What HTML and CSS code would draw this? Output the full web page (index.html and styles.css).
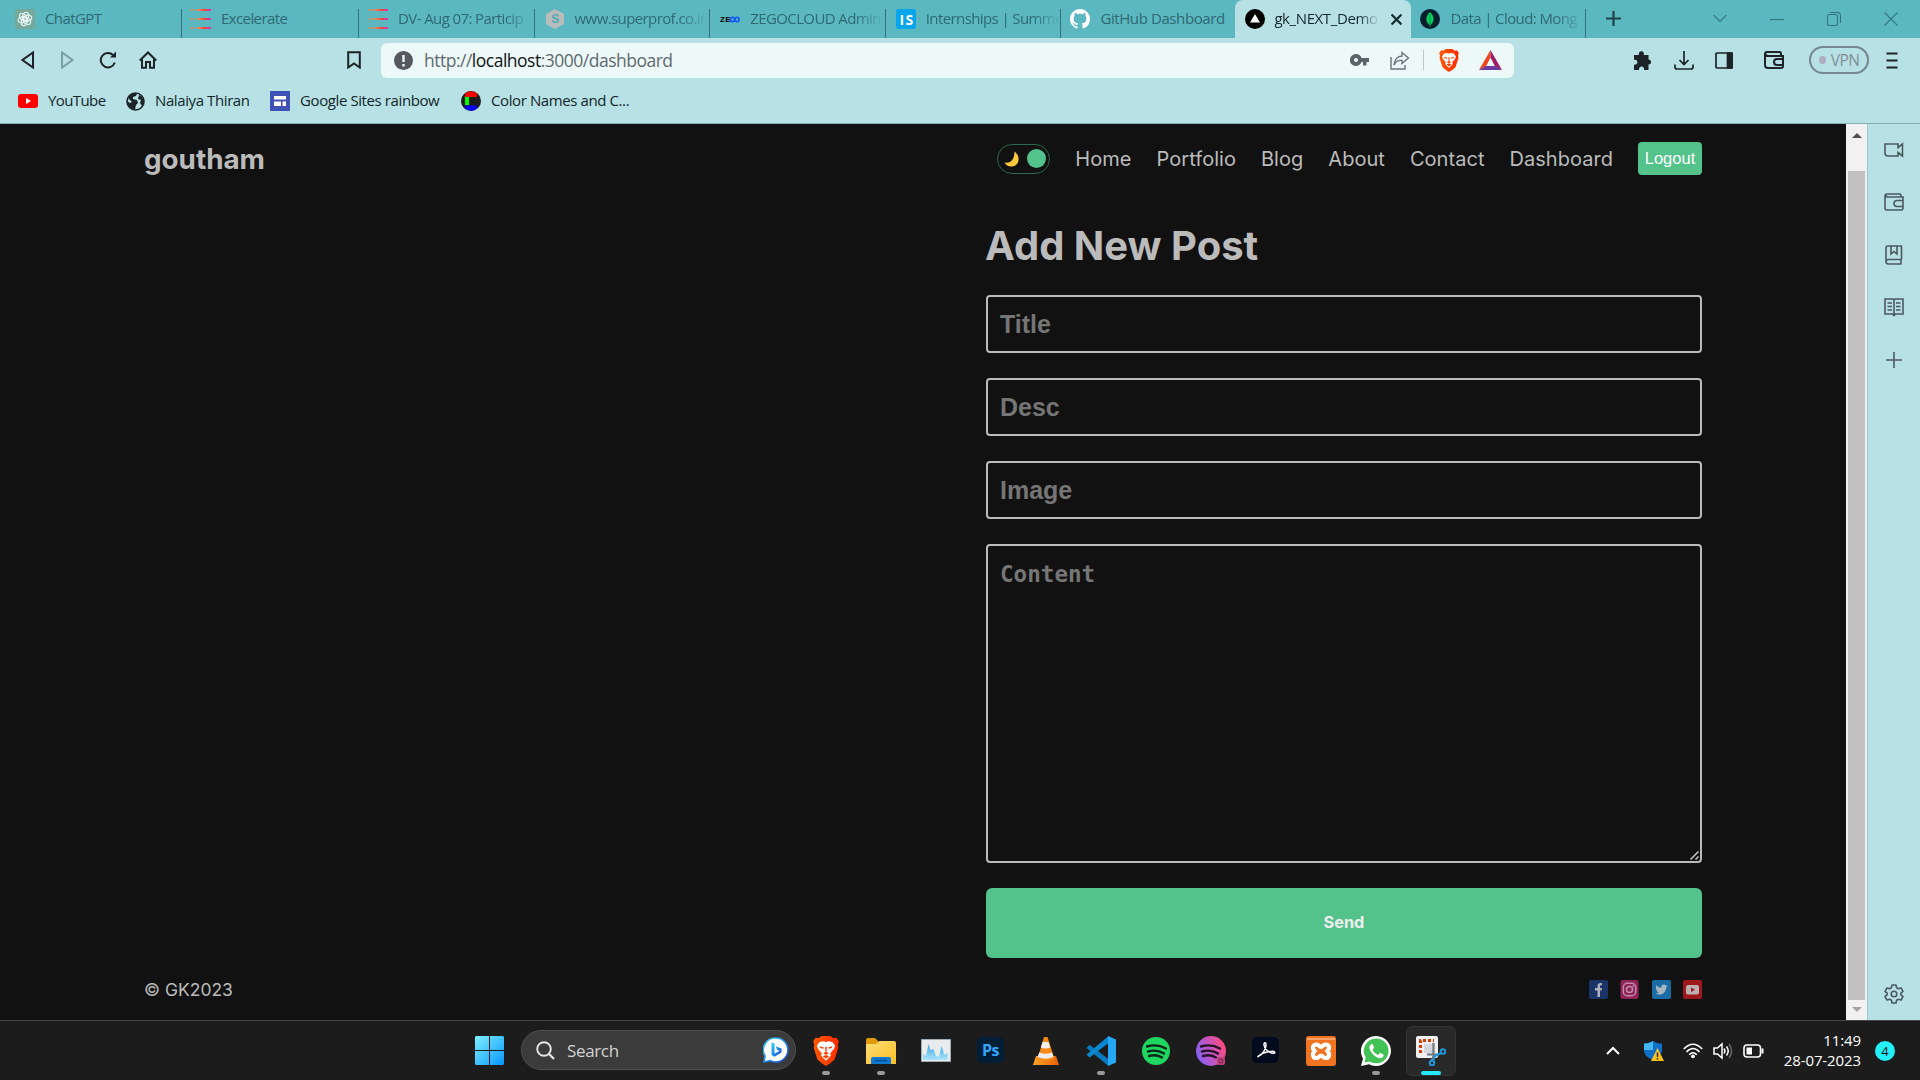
FILE: index.html
```html
<!DOCTYPE html>
<html lang="en">
<head>
<meta charset="utf-8">
<title>gk_NEXT_Demo</title>
<link rel="stylesheet" href="styles.css">
</head>
<body>
<svg class="defs" width="0" height="0" aria-hidden="true">
  <defs>
    <linearGradient id="warm" x1="0" x2="1" y1="0" y2="0"><stop offset="0" stop-color="#f98a4a"/><stop offset=".5" stop-color="#f0463f"/><stop offset="1" stop-color="#e22bb5"/></linearGradient>
    <linearGradient id="win" x1="0" x2="1" y1="0" y2="1"><stop offset="0" stop-color="#7df0fd"/><stop offset="1" stop-color="#0795fb"/></linearGradient>
    <linearGradient id="folder" x1="0" x2="1" y1="0" y2="1"><stop offset="0" stop-color="#ffdf77"/><stop offset="1" stop-color="#fdbd25"/></linearGradient>
    <linearGradient id="brave" x1="0" x2="1" y1="0" y2="0"><stop offset="0" stop-color="#ff5a00"/><stop offset="1" stop-color="#ff2a00"/></linearGradient>
    <linearGradient id="chart" x1="0" x2="0" y1="0" y2="1"><stop offset="0" stop-color="#3aa4e0"/><stop offset="1" stop-color="#a8e4fb"/></linearGradient>
    <linearGradient id="spot" x1="0" x2="1" y1=".7" y2=".3"><stop offset="0" stop-color="#8060f5"/><stop offset=".5" stop-color="#c455c0"/><stop offset="1" stop-color="#ff4a78"/></linearGradient>
    <linearGradient id="bing" x1="0" x2="1" y1="0" y2="1"><stop offset="0" stop-color="#2fd3f5"/><stop offset="1" stop-color="#1447d8"/></linearGradient>
    <linearGradient id="cone" x1="0" x2="1" y1="0" y2="0"><stop offset="0" stop-color="#ffa227"/><stop offset="1" stop-color="#e8600a"/></linearGradient>
    <symbol id="rows" viewBox="0 0 20 20"><g fill="#f08a4a"><path d="M0 0h1v2H0zM2 0h1v2H2zM4.500 0H6v2H4.500zM0 9h1v2H0zM2 9h1v2H2zM4.500 9H6v2H4.500zM0 18h1v2H0zM2 18h1v2H2zM4.500 18H6v2H4.500z"/></g><path d="M7 0h13v2H7zM7 9h13v2H7zM7 18h13v2H7z" fill="url(#warm)"/></symbol>
    <symbol id="lion" viewBox="0 0 24 28"><path d="M5 2 8 0h8l3 2 2.500-.5L24 5l-1 3 .5 3-3.500 11-4 3.500L12 28l-4-2.500L4 22 .5 11 1 8 0 5l2.500-3.500z" fill="url(#brave)"/><path d="M12 5.500 9.500 5 6 5.500 3.500 9l1 3 3.500 4-.5 2.500L12 23l4.500-4.500L16 16l3.500-4 1-3L18 5.500 14.500 5z" fill="#fff"/><path d="m6 9.500 4 1.300-.5 1-3-.6zM18 9.500l-4 1.300.5 1 3-.6zM11.200 10h1.600l-.2 5 2 1.200-2.600 1.600L9.400 16.200l2-1.200zM9 19l3-1.200 3 1.200-3 2.300z" fill="#ff4208"/></symbol>
  </defs>
</svg>

<header class="chrome">
  <div class="tabs">
    <div class="tab first"><svg class="fav" viewBox="0 0 20 20"><rect width="20" height="20" rx="2" fill="#75a99c"/><g fill="none" stroke="#eaf6f3" stroke-width="1.200"><ellipse cx="10" cy="7.300" rx="3" ry="4.200" transform="rotate(15 10 10)"/><ellipse cx="10" cy="7.300" rx="3" ry="4.200" transform="rotate(75 10 10)"/><ellipse cx="10" cy="7.300" rx="3" ry="4.200" transform="rotate(135 10 10)"/><ellipse cx="10" cy="7.300" rx="3" ry="4.200" transform="rotate(195 10 10)"/><ellipse cx="10" cy="7.300" rx="3" ry="4.200" transform="rotate(255 10 10)"/><ellipse cx="10" cy="7.300" rx="3" ry="4.200" transform="rotate(315 10 10)"/></g></svg><span>ChatGPT</span></div>
    <div class="tab wide"><svg class="fav"><use href="#rows"/></svg><span>Excelerate</span></div>
    <div class="tab fade near"><svg class="fav"><use href="#rows"/></svg><span>DV- Aug 07: Particip</span></div>
    <div class="tab fade"><svg class="fav" viewBox="0 0 20 20"><path d="M10 0l9 5v10l-9 5-9-5V5z" fill="#b9bcbb"/><text x="10" y="14" class="glyph teal" text-anchor="middle">S</text></svg><span>www.superprof.co.in</span></div>
    <div class="tab fade"><svg class="fav" viewBox="0 0 20 20"><text x="0" y="13" class="zego" textLength="10">ZE</text><g fill="none" stroke="#1558f0" stroke-width="1.700"><circle cx="12.500" cy="10.500" r="2.100"/><circle cx="17" cy="10.500" r="2.100"/></g></svg><span>ZEGOCLOUD Admin</span></div>
    <div class="tab fade"><svg class="fav" viewBox="0 0 20 20"><rect width="20" height="20" rx="2.500" fill="#06a5ec"/><text x="10" y="15.500" class="is" text-anchor="middle" textLength="13">IS</text></svg><span>Internships | Summe</span></div>
    <div class="tab last-before"><svg class="fav" viewBox="0 0 16 16"><path fill="#fff" d="M8 0C3.580 0 0 3.580 0 8c0 3.540 2.290 6.530 5.470 7.590.4.070.55-.17.55-.38 0-.19-.01-.82-.01-1.490-2.010.37-2.530-.49-2.690-.94-.09-.23-.48-.94-.82-1.130-.28-.15-.68-.52-.01-.53.63-.01 1.080.58 1.230.82.72 1.210 1.870.87 2.330.66.07-.52.28-.87.51-1.070-1.780-.2-3.640-.89-3.640-3.950 0-.87.31-1.590.82-2.150-.08-.2-.36-1.020.08-2.120 0 0 .67-.21 2.200.82.64-.18 1.320-.27 2-.27s1.360.09 2 .27c1.530-1.040 2.200-.82 2.200-.82.44 1.100.16 1.920.08 2.120.51.56.82 1.270.82 2.150 0 3.070-1.870 3.750-3.650 3.950.29.25.54.73.54 1.480 0 1.070-.01 1.930-.01 2.200 0 .21.15.46.55.38A8.010 8.010 0 0 0 16 8c0-4.420-3.580-8-8-8z"/></svg><span>GitHub Dashboard</span></div>
    <div class="tab active"><svg class="fav" viewBox="0 0 20 20"><circle cx="10" cy="10" r="10"/><path d="M10 5l5 8.500H5z" fill="#fff"/></svg><span>gk_NEXT_Demo</span><svg class="close" viewBox="0 0 10 10"><path d="M.5.500l9 9M9.500.500l-9 9" stroke="#15292e" stroke-width="2"/></svg></div>
    <div class="tab fade end"><svg class="fav" viewBox="0 0 20 20"><circle cx="10" cy="10" r="10" fill="#001e2b"/><path d="M10 3c5 5 4.500 10 0 13.500C5.500 13 5 8 10 3z" fill="#00d563"/><path d="M10 5v13" stroke="#00853f" stroke-width="1"/></svg><span>Data | Cloud: Mong</span></div>
    <svg class="plus" viewBox="0 0 15 15"><path d="M7.500 0v15M0 7.500h15" stroke="#1d444b" stroke-width="2.200"/></svg>
    <div class="winctl">
      <svg width="14" height="9" viewBox="0 0 14 9"><path d="M.5.800 7 7.500 13.500.800"/></svg>
      <svg width="14" height="14" viewBox="0 0 14 14"><path d="M0 7.500h14"/></svg>
      <svg width="14" height="14" viewBox="0 0 14 14"><rect x=".5" y="2.500" width="10" height="11" rx="2"/><path d="M3 .5h7.500a3 3 0 0 1 3 3V11"/></svg>
      <svg width="14" height="14" viewBox="0 0 14 14"><path d="M.5.500l13 13M13.500.500l-13 13"/></svg>
    </div>
  </div>

  <div class="toolbar">
    <div class="navbtns">
      <svg width="14" height="18" viewBox="0 0 14 18"><path d="M12 1.500v15L1.500 9z"/></svg>
      <svg class="dim" width="14" height="18" viewBox="0 0 14 18"><path d="M2 1.500v15L12.500 9z"/></svg>
      <svg width="18" height="18" viewBox="0 0 18 18"><path d="M15.800 11.500A7.200 7.200 0 1 1 14 4"/><path d="M11 6.500h6V.5z" fill="#1d2326" stroke="none"/></svg>
      <svg class="home" width="18" height="18" viewBox="0 0 18 18"><path d="M.8 9.500 9 1.500l8.200 8M3 8v8.800h4V11h4v5.800h4V8"/></svg>
    </div>
    <svg class="bm" width="14" height="18" viewBox="0 0 14 18"><path d="M1.200 1.200h11.600v15.300L7 12.500l-5.800 4z"/></svg>
    <div class="url">
      <svg width="19" height="19" viewBox="0 0 19 19"><circle cx="9.500" cy="9.500" r="9.500" fill="#55595f"/><path d="M9.500 4v7M9.500 13v2.500" stroke="#edf8f9" stroke-width="2.400"/></svg>
      <span class="addr">http://<b>localhost</b>:3000/dashboard</span>
      <svg class="key" width="19" height="12" viewBox="0 0 19 12"><path d="M6 0a6 6 0 1 0 5.500 8H13v3.500h3.500V8H19V4h-7.500A6 6 0 0 0 6 0zm0 4a2 2 0 1 1 0 4 2 2 0 0 1 0-4z" fill="#5d6467" fill-rule="evenodd"/></svg>
      <svg class="share" width="20" height="19" viewBox="0 0 20 19"><path class="ln" d="M1 6v12h14v-4M12 1.500l6.500 5.500-6.500 5.500V9.500C8 9 5.500 11 4 14c.3-5 3.500-9 8-9z"/></svg>
      <i class="vline"></i>
      <svg class="shield" width="20" height="23"><use href="#lion"/></svg>
      <svg class="bat" width="23" height="20" viewBox="0 0 23 20"><path d="M11.500 0 0 20l7-3.500 4.500-9z" fill="#f0471f"/><path d="M11.500 0 23 20l-7-3.500-4.500-9z" fill="#9c1f63"/><path d="M0 20h23l-7-4H7z" fill="#6a3a9c"/></svg>
    </div>
    <div class="exts">
      <svg width="18" height="19" viewBox="0 0 18 19"><path d="M0 4h5a2.600 2.600 0 1 1 4.700 0H14.500v4.500a2.500 2.500 0 1 1 0 5V19H10a2.600 2.600 0 1 0-4.900 0H0v-5.500a2.500 2.500 0 1 0 0-4.700z" fill="#1d2326" stroke="none"/></svg>
      <svg class="thin" width="20" height="19" viewBox="0 0 20 19"><path d="M10 0v13M5.500 9l4.500 4.500L14.500 9M1 13.500V16a2 2 0 0 0 2 2h14a2 2 0 0 0 2-2v-2.500"/></svg>
      <svg class="thin" width="18" height="17" viewBox="0 0 18 17"><rect x="1" y="1" width="16" height="15" rx="1"/><path d="M12.500 1H17v15h-4.500z" fill="#1d2326"/></svg>
      <svg class="wal" width="20" height="18" viewBox="0 0 20 18"><path d="M17 5V2.500A1.500 1.500 0 0 0 15.500 1H3a2 2 0 0 0-2 2v11a3 3 0 0 0 3 3h13a2 2 0 0 0 2-2V5H4A3 3 0 0 1 1.500 3M19 8h-6a3 3 0 0 0 0 6h6"/></svg>
      <span class="vpn"><i></i>VPN</span>
      <svg class="burger" width="12" height="17" viewBox="0 0 12 17"><path d="M.5 1.500h11M.5 8.500h11M.5 15.500h11"/></svg>
    </div>
  </div>

  <div class="bookmarks">
    <a><svg width="20" height="20" viewBox="0 0 20 20"><rect y="3" width="20" height="14" rx="3" fill="red"/><path d="M8 7l5 3-5 3z" fill="#fff"/></svg><span>YouTube</span></a>
    <a class="b2"><svg width="19" height="19" viewBox="0 0 19 19"><circle cx="9.500" cy="9.500" r="8.500" fill="#b7e1e4" stroke="#1d2326" stroke-width="1.600"/><path d="M3 4c2-2.500 5-3 8-2.500L10 4 7 5v2l4 1 1 3-2 2-1 4.500C4 17 1 13 1 9l3 2 2-1-3-3zM13 3l3 2 2 5-2 4-2-3 1-3-3-1z" fill="#1d2326"/></svg><span>Nalaiya Thiran</span></a>
    <a class="b3"><svg width="20" height="20" viewBox="0 0 20 20"><path fill="#4051b5" d="M0 0h20v20H0z"/><path d="M4 5h12v3.500H4zM4 10.500h7V15H4zM12.500 10.500H16V15h-3.500z" fill="#fff"/></svg><span>Google Sites rainbow</span></a>
    <a class="b4"><svg width="20" height="20" viewBox="0 0 20 20"><circle cx="10" cy="10" r="10" fill="#1c1c1c"/><path d="M4 2.500Q10-2 16 2.500V6H4z" fill="red"/><path d="M4 6h4v8H4z" fill="#0f0"/><path d="M4 14.500h12v3Q10 22 4 17.500z" fill="#00f"/></svg><span>Color Names and C...</span></a>
  </div>
</header>

<div class="middle">
  <main class="page">
    <nav class="site-nav">
      <a class="logo">goutham</a>
      <div class="links">
        <div class="toggle"><svg width="16" height="16" viewBox="0 0 16 16"><path d="M10.500.5C16.500 5 15.500 13 10 15c-4 1.500-7.500 0-9.500-3.500 6 1.500 10-3 10-11z" fill="#ffc83d"/></svg><i></i></div>
        <a>Home</a><a>Portfolio</a><a>Blog</a><a>About</a><a>Contact</a><a>Dashboard</a>
        <button class="logout">Logout</button>
      </div>
    </nav>
    <form class="post">
      <h1>Add New Post</h1>
      <input placeholder="Title"><input placeholder="Desc"><input placeholder="Image">
      <div class="area">
        <textarea placeholder="Content"></textarea>
        <svg class="grip" width="9" height="9" viewBox="0 0 9 9"><path d="M.5 8.500l8-8M5.500 8.500l3-3" stroke="#c8c8c8" stroke-width="1.500"/></svg>
      </div>
      <button type="button" class="send">Send</button>
    </form>
    <footer class="foot">
      <span>© GK2023</span>
      <div class="social">
        <svg viewBox="0 0 19 19"><rect width="19" height="19" rx="2" fill="#1b3467"/><path d="M8.500 17V10.500H6V8h2.500V6c0-2 1.200-3 3-3H13v2.300h-1c-.8 0-1 .4-1 1.200V8h2l-.4 2.500H11V17z" fill="#aeb2bb"/></svg>
        <svg viewBox="0 0 19 19"><rect x=".5" width="18" height="19" rx="2" fill="#8f2257"/><g fill="none" stroke="#c08aa6" stroke-width="1.500"><rect x="3.300" y="3.300" width="12.400" height="12.400" rx="4"/><circle cx="9.500" cy="9.500" r="3"/></g><circle cx="13.200" cy="5.900" r=".9" fill="#c08aa6"/></svg>
        <svg viewBox="0 0 19 19"><rect width="19" height="19" rx="2" fill="#1b6ba5"/><path d="M15.500 6l-1.400 1.400c0 4-3 7.100-6.800 7.100-1.500 0-2.700-.4-3.800-1 1.300.1 2.400-.2 3.400-1-1.100-.1-1.900-.8-2.200-1.700h1c-1.200-.4-1.900-1.300-1.900-2.500l1 .3C3.800 7.700 3.500 6.400 4.100 5.200 5.500 6.700 7.300 7.600 9.300 7.700c-.5-2.600 2.300-4.200 4.200-2.500l1.600-.5-.9 1.300z" fill="#a9b8c2"/></svg>
        <svg viewBox="0 0 19 19"><rect width="19" height="19" rx="2" fill="#9c181c"/><rect x="3" y="5" width="13" height="9.500" rx="2" fill="#bdb0b0"/><path d="M8 7.500l4 2.200L8 12z" fill="#9c181c"/></svg>
      </div>
    </footer>
  </main>
  <div class="scroll"><i class="up"></i><div class="thumb"></div><i class="down"></i></div>
  <aside class="side">
    <svg viewBox="0 0 20 20"><path d="M1 4h13v3.500L18.500 4v12L14 12.500V16H4a3 3 0 0 1-3-3z"/></svg>
    <svg viewBox="0 0 20 20"><path d="M17 5V3.500A1.500 1.500 0 0 0 15.500 2H3a2 2 0 0 0-2 2v12a2 2 0 0 0 2 2h14a2 2 0 0 0 2-2V5H4A3 3 0 0 1 1.500 3.500M19 8.500h-6a3 3 0 0 0 0 6h6"/></svg>
    <svg viewBox="0 0 20 20"><path d="M17.500 14.500V1H4a2 2 0 0 0-2 2v13.500A2.500 2.500 0 0 0 4.500 19h13M17.500 14.500h-13A2.300 2.300 0 0 0 2 17M17 14.500V19M7 1v8l3-2.500L13 9V1"/></svg>
    <svg viewBox="0 0 20 20"><path d="M10 3v15M10 3 9 2H1v15h7.500l1.500 1.500 1.500-1.500H19V2h-8zM3.500 6H8M3.500 9.500H8M3.500 13H8M12 6h4.500M12 9.500h4.500M12 13h4.500"/></svg>
    <svg viewBox="0 0 20 20"><path d="M10 2v16M2 10h16"/></svg>
    <svg class="gear" viewBox="0 0 20 20"><circle cx="10" cy="10" r="2.800"/><path d="M8 1h4l.6 2.800 1.700 1 2.700-.9 2 3.400-2.100 1.900v1.600l2.100 1.900-2 3.400-2.700-.9-1.700 1L12 19H8l-.6-2.800-1.700-1-2.700.9-2-3.400 2.100-1.900V9.200L1 7.300l2-3.400 2.700.9 1.700-1z" stroke-linejoin="round"/></svg>
  </aside>
</div>

<div class="taskbar">
  <svg class="start" width="29" height="29" viewBox="0 0 29 29"><path d="M1 0h13v14H0V1zM15 0h13l1 1v13H15zM0 15h14v14H1l-1-1zM15 15h14v13l-1 1H15z" fill="url(#win)"/></svg>
  <div class="search">
    <svg width="19" height="19" viewBox="0 0 19 19" fill="none" stroke="#e6e6e6" stroke-width="1.900"><circle cx="8" cy="8" r="6.800"/><path d="M12.800 12.800 18 18" stroke-width="2.300"/></svg>
    <span>Search</span>
    <svg width="26" height="26" viewBox="0 0 26 26"><path d="M13 1a12 12 0 1 1-5.500 22.700L1 25l1-6A12 12 0 0 1 13 1z" fill="#fff" stroke="url(#bing)" stroke-width="1.600"/><path d="M8.500 5.500l3 1v10l5-2.500-2.500-1.300-1.200-3.400 5.700 2.200v4l-7 4.200-3-1.800z" fill="url(#bing)"/></svg>
  </div>
  <div class="apps">
    <span class="run"><svg viewBox="0 0 30 30"><use href="#lion" x="2" y="0" width="26" height="30"/></svg></span>
    <span class="run"><svg viewBox="0 0 30 30"><path d="M0 4q0-2 2-2h7l3 3v4H0z" fill="#e09b07"/><path d="M0 8h10l3-3h15q2 0 2 2v21H0z" fill="url(#folder)"/><path d="M5 28v-5q0-2 2-2h16q2 0 2 2v5z" fill="#0f78d1"/><path d="M9 24.500h12" stroke="#064c8f" stroke-width="1.500"/></svg></span>
    <span><svg viewBox="0 0 30 30"><path d="M.5 3.500h29v22H.5z" fill="#e8ecef" stroke="#9faab3"/><path d="M2 18l3 2 2.500-12 2 6 3-1 2.500 7 3 1 2.500-11 3 9 3-2v7H2z" fill="url(#chart)"/></svg></span>
    <span><svg viewBox="0 0 30 30"><rect x="1" y="1" width="27" height="26" rx="5" fill="#001e36"/><text x="14.500" y="19.500" class="ps" text-anchor="middle">Ps</text></svg></span>
    <span><svg viewBox="0 0 30 30"><path d="M5 20h20l3 9H2z" fill="url(#cone)"/><path d="M13 1h3.500l7 22q-8.500 4-17 0z" fill="#f58a14"/><path d="M11.500 6h6l1.700 5.500q-4.700 2-9.400 0zM8.200 16.500q6.300 2.500 12.800 0l1.500 4.500q-8 3.500-16 0z" fill="#eee"/></svg></span>
    <span class="run"><svg viewBox="0 0 30 30"><path d="M3.500 8.800 22.500 23v7L.5 12z" fill="#0879bf"/><path d="M22 .5v7L3.500 21.500.5 18.500z" fill="#0b86d0"/><path d="M22 0l8 3.500v23L22 30z" fill="#25a8f5"/></svg></span>
    <span><svg viewBox="0 0 30 30"><circle cx="15" cy="15" r="14" fill="#1ed760"/><path d="M6 10.500q10-3 19 2M7 15.500q9-2.500 16 2M8 20q7-2 13 1.500" fill="none" stroke="#10251a" stroke-width="2.400" stroke-linecap="round"/></svg></span>
    <span><svg viewBox="0 0 30 30"><circle cx="15" cy="15" r="15" fill="url(#spot)"/><path d="M5 10.500q10-3 19 2M6 15.500q9-2.500 16 2M7 20q7-2 13 1.500" fill="none" stroke="#221425" stroke-width="2.400" stroke-linecap="round"/><rect x="21" y="21" width="8" height="8" rx="2" fill="#c0407a"/><circle cx="25" cy="25" r="2" fill="none" stroke="#702050"/></svg></span>
    <span><svg viewBox="0 0 30 30"><rect x="1" y="1" width="27" height="26" rx="5" fill="#000b1d"/><path d="M7 20.500c5-2 8-8 8-11.500 0-3-2.200-3-2 0 .3 4 5 8 9 8.300 2.500.2 2.500-2.300-1-2-4 .2-9 1.500-12.500 4-2 1.500-1.500 1.500-1.500 1.200z" fill="none" stroke="#fff" stroke-width="1.500"/></svg></span>
    <span><svg viewBox="0 0 30 30"><rect width="30" height="30" rx="3" fill="#f07422"/><path d="M1 2h28v2H1z" fill="#f8a468"/><path d="M10.500 8.500c-4 0-4.500 4-2 6.500-2.500 2.500-2 7 2 7 2.500 0 3-2.500 4.500-2.500s2 2.500 4.500 2.500c4 0 4.500-4.500 2-7 2.500-2.500 2-6.500-2-6.500-2.500 0-3 2.500-4.500 2.500s-2-2.500-4.500-2.500z" fill="none" stroke="#fff" stroke-width="4.200"/></svg></span>
    <span class="run"><svg viewBox="0 0 30 30"><path d="M15 0a15 15 0 1 1-7 28.300L0 30l2-7.500A15 15 0 0 1 15 0z" fill="#fff"/><path d="M15 2.500a12.400 12.400 0 1 1-6.300 23L3.500 26.500l1.200-5A12.400 12.400 0 0 1 15 2.500z" fill="#42c254"/><path d="M10.500 8c-3 2-2.500 5 0 8.500s6 6 9 5.700c2.500-.3 3.500-2.500 3-3.700l-3.500-1.800-2 2.200c-2.500-1-4.500-3-5.500-5.200l1.500-1.900L11.800 8z" fill="#fff"/></svg></span>
    <span class="cur"><svg viewBox="0 0 30 30"><rect width="22" height="22" rx="2" fill="#f1f1f3"/><path d="M4.500 17V4.500H18" fill="none" stroke="#d83b01" stroke-width="3" stroke-dasharray="3 2"/><path d="M8 8h9v9H8z" fill="#d5d7dc"/><path d="M17.500 7v13l-2 5M11 18.500h12" stroke="#6f777d" stroke-width="2.200" fill="none"/><g fill="none" stroke="#1e97dc" stroke-width="2"><circle cx="16" cy="27" r="2.300"/><circle cx="27" cy="15.500" r="2.300"/><path d="M17 25l2-5 6-3"/></g></svg></span>
  </div>
  <div class="tray">
    <svg width="14" height="9" viewBox="0 0 14 9"><path d="M1 8l6-6 6 6" fill="none" stroke="#fff" stroke-width="2"/></svg>
    <svg class="def" width="20" height="20" viewBox="0 0 20 20"><path d="M9 0c3 2 6 2.500 9 2.500V9c0 5-4 8-9 10-5-2-9-5-9-10V2.500C3 2.500 6 2 9 0z" fill="#0f6fc9"/><path d="M9 0v9H0V2.500C3 2.500 6 2 9 0z" fill="#45b8f2"/><path d="M13.500 7 20 20H7z" fill="#ffc21a"/><path d="M13.500 11.500v4.500M13.500 17v1.500" stroke="#222" stroke-width="1.500"/></svg>
    <svg class="wifi" width="20" height="16" viewBox="0 0 20 16"><g fill="none" stroke="#fff" stroke-width="1.600"><path d="M.8 6Q10-3.500 19.200 6M3.500 9Q10 2 16.500 9M6.200 11.800Q10 7.800 13.800 11.800"/></g><circle cx="10" cy="13.300" r="1.900" fill="#fff"/></svg>
    <svg class="vol" width="20" height="18" viewBox="0 0 20 18" fill="none" stroke="#fff" stroke-width="1.500"><path d="M1 6h3.500L9 2v14l-4.500-4H1zM11 6.500q1.800 2.500 0 5M13.500 4.500q3.500 4.500 0 9"/><path d="M16 2q5 7 0 14" stroke="#666"/></svg>
    <svg class="batt" width="21" height="14" viewBox="0 0 21 14"><rect x="1" y="1" width="16.500" height="12" rx="3" fill="none" stroke="#fff" stroke-width="1.600"/><path d="M3.500 3.500H9v7H3.500zM18.500 4.500h2v5h-2z" fill="#fff"/></svg>
    <div class="clock"><span>11:49</span><span>28-07-2023</span></div>
    <b class="badge">4</b>
  </div>
</div>
</body>
</html>
```
FILE: styles.css
```css
* { box-sizing: border-box; }
body {
  margin: 0;
  width: 1920px;
  height: 1080px;
  overflow: hidden;
  display: flex;
  flex-direction: column;
  background: #111;
  font-family: "Open Sans", "Noto Sans", sans-serif;
}
svg { display: block; flex: none; }
.defs { position: absolute; }

/* browser chrome */
.chrome { height: 124px; background: #b7e1e4; border-bottom: 1px solid #7fb0b4; flex: none; }
.tabs { height: 38px; background: #5bb8c1; display: flex; align-items: stretch; }
.tab {
  width: 175.600px;
  display: flex;
  align-items: center;
  gap: 10px;
  padding: 0 0 0 10px;
  color: #2f6971;
  font-size: 15px;
  letter-spacing: -.6px;
  white-space: nowrap;
  background: linear-gradient(#39727a, #39727a) right bottom / 1px 29px no-repeat;
}
.tab span { flex: 1; padding-bottom: 2px; }
.tab.first { width: 182px; padding-left: 15px; }
.tab.wide { width: 177px; padding-left: 9px; }
.tab.near { padding-left: 9px; }
.tab.fade span, .tab.active span { -webkit-mask-image: linear-gradient(90deg, #000 78%, transparent 98%); mask-image: linear-gradient(90deg, #000 78%, transparent 98%); }
.tab.last-before { background: none; width: 174px; padding-left: 9px; }
.tab.last-before span { letter-spacing: -.4px; }
.tab.active { background: #b7e1e4; color: #15292e; border-radius: 8px 8px 0 0; width: 176px; padding-right: 9px; gap: 9px; }
.tab.active span { letter-spacing: -.4px; }
.tab.end { width: 174.500px; padding-left: 9px; }
.fav { width: 20px; height: 20px; }
.close { width: 11px; height: 11px; }
.glyph { font: bold 12px "Liberation Sans", sans-serif; }
.teal { fill: #49aab4; }
.zego { font: bold 8px "Liberation Sans", sans-serif; }
.is { font: bold 14px "Open Sans", sans-serif; fill: #fff; }
.plus { width: 15px; height: 15px; margin: 11px 0 0 20px; }
.winctl { margin-left: auto; display: flex; align-items: center; gap: 43px; padding-right: 22px; padding-bottom: 1px; }
.winctl svg { fill: none; stroke: #33757d; stroke-width: 1.100; }

.toolbar { height: 44px; display: flex; align-items: center; }
.toolbar svg { fill: none; stroke: #1d2326; stroke-width: 2; }
.toolbar svg.thin { stroke-width: 1.700; }
.toolbar .url svg { stroke: none; }
.toolbar .url .ln { stroke: #6a7376; stroke-width: 1.400; }
.navbtns { display: flex; gap: 25px; padding-left: 21px; width: 347px; }
.navbtns .dim { stroke: #7c9fa3; }
.navbtns .home { margin-left: -3px; }
.url { width: 1133px; height: 35px; margin-left: 20px; padding-left: 13px; background: #edf8f9; border-radius: 6px; display: flex; align-items: center; }
.addr { margin-left: 11px; font-size: 17.500px; color: #5f6a6d; letter-spacing: -.5px; flex: 1; white-space: nowrap; padding-bottom: 1px; }
.addr b { font-weight: 400; color: #101415; }
.share { margin-left: 21px; }
.vline { width: 1px; height: 20px; background: #b9c9cb; margin-left: 13px; }
.shield { margin-left: 15px; }
.bat { margin: 0 12px 0 20px; }
.exts { display: flex; align-items: center; margin-left: 120px; gap: 21.500px; }
.exts .wal { margin-left: 9px; }
.vpn { width: 60px; height: 28px; margin-left: 4px; border: 2px solid #75868f; border-radius: 14px; display: flex; align-items: center; justify-content: center; gap: 5px; font-size: 15.500px; letter-spacing: -.6px; color: #828f98; }
.vpn i { width: 7px; height: 8px; border-radius: 50%; background: #b0acc0; }
.burger { margin-left: -5px; }

.bookmarks { height: 38px; display: flex; padding-left: 18px; font-size: 15px; color: #14262a; letter-spacing: -.4px; }
.bookmarks a { display: flex; align-items: center; gap: 10px; width: 108px; white-space: nowrap; }
.bookmarks span { padding-bottom: 2px; }
.bookmarks a:first-child { letter-spacing: -.6px; }
.bookmarks .b2 { width: 144px; }
.bookmarks .b3 { width: 191px; }
.bookmarks .b4 { width: 180px; }

/* site */
.middle { flex: 1; display: flex; min-height: 0; }
.page { width: 1846px; padding: 0 144px; background: #111; color: #bbb; font-family: Inter, sans-serif; }
.site-nav { display: flex; justify-content: space-between; align-items: center; height: 69px; }
.logo { font-size: 27.800px; font-weight: 700; }
.links { display: flex; align-items: center; gap: 25px; font-size: 20px; letter-spacing: .04px; }
.toggle { width: 53px; height: 30px; border: 1px solid #2b694b; border-radius: 15px; display: flex; align-items: center; justify-content: space-between; padding: 0 3px 0 6px; }
.toggle i { width: 19px; height: 19px; border-radius: 50%; background: #53c28b; }
.logout { width: 64px; height: 33px; border: 0; border-radius: 4px; background: #53c28b; color: #fff; font: 16.500px "Liberation Sans", Arial, sans-serif; padding: 0 0 1px; }
.post { width: 716px; margin-left: auto; padding-top: 28px; display: flex; flex-direction: column; gap: 25px; }
.post h1 { margin: 0 0 0 -1px; font-size: 40px; line-height: 49px; font-weight: 700; }
.post input, .post textarea { display: block; border: 2px solid #bbb; border-radius: 4px; background: transparent; padding: 12px; font: bold 25px "Liberation Sans", Arial, sans-serif; color: #bbb; outline: 0; }
.post input { height: 58px; }
.area { position: relative; }
.post textarea { width: 716px; height: 319px; padding-top: 15px; font: bold 22.600px "DejaVu Sans Mono", monospace; resize: none; }
.grip { position: absolute; right: 3px; bottom: 3px; }
.post ::placeholder { color: #757575; opacity: 1; }
.send { height: 70px; border: 0; border-radius: 6px; background: #53c28b; color: #eee; font: bold 16.300px Inter, sans-serif; padding-bottom: 3px; }
.foot { height: 62px; display: flex; justify-content: space-between; align-items: center; font-size: 17.500px; }
.social { display: flex; gap: 12.300px; }
.social svg { width: 19px; height: 19px; }

.scroll { width: 21px; background: #f1f1f1; display: flex; flex-direction: column; align-items: center; }
.scroll i { width: 0; height: 0; border: 5px solid transparent; }
.scroll .up { border-top: 0; border-bottom-color: #505050; margin-top: 9px; }
.scroll .down { border-bottom: 0; border-top-color: #a3a3a3; margin-top: 7px; }
.thumb { width: 17px; height: 829px; margin-top: 33px; background: #c1c1c1; }
.side { width: 53px; background: #b7e1e4; border-left: 1px solid #9dc9cd; display: flex; flex-direction: column; align-items: center; gap: 32.500px; padding: 15.500px 1px 16px 0; }
.side svg { width: 20px; height: 20px; fill: none; stroke: #4b5a60; stroke-width: 1.600; }
.side .gear { margin-top: auto; }

/* taskbar */
.taskbar { height: 60px; background: #1c1c1c; border-top: 1px solid #454545; display: flex; align-items: center; flex: none; }
.start { margin-left: 475px; }
.search { width: 275px; height: 40px; margin: 0 0 1px 17px; padding: 0 6px 0 14px; border-radius: 20px; background: #3b3b3b; border: 1px solid #505050; display: flex; align-items: center; gap: 12px; color: #d2d2d2; font-size: 17px; letter-spacing: -.35px; }
.search span { flex: 1; }
.apps { display: flex; margin-left: 5px; gap: 5px; }
.apps span { width: 50px; height: 50px; border-radius: 6px; padding-top: 10px; display: flex; flex-direction: column; align-items: center; gap: 5px; }
.apps svg { width: 30px; height: 30px; }
.apps .run::after { content: ""; width: 8px; height: 4px; border-radius: 2px; background: #999; }
.apps .cur { background: #292929; border: 1px solid #333; padding-top: 9px; }
.apps .cur::after { content: ""; width: 20px; height: 4px; border-radius: 2px; background: #22e9fb; }
.ps { font: bold 16px "Open Sans", sans-serif; letter-spacing: -.5px; fill: #31a8ff; }
.tray { margin-left: auto; padding-right: 25px; display: flex; align-items: center; color: #fff; }
.def { margin-left: 24px; }
.wifi { margin-left: 19px; }
.vol { margin-left: 10px; }
.batt { margin-left: 10px; }
.clock { width: 97px; display: flex; flex-direction: column; text-align: right; font-size: 15px; line-height: 20px; letter-spacing: -.1px; padding-bottom: 2px; }
.badge { width: 20px; height: 20px; margin-left: 14px; border-radius: 50%; background: #22f0fb; color: #111; font-size: 13px; font-weight: 400; line-height: 20px; text-align: center; }
```
